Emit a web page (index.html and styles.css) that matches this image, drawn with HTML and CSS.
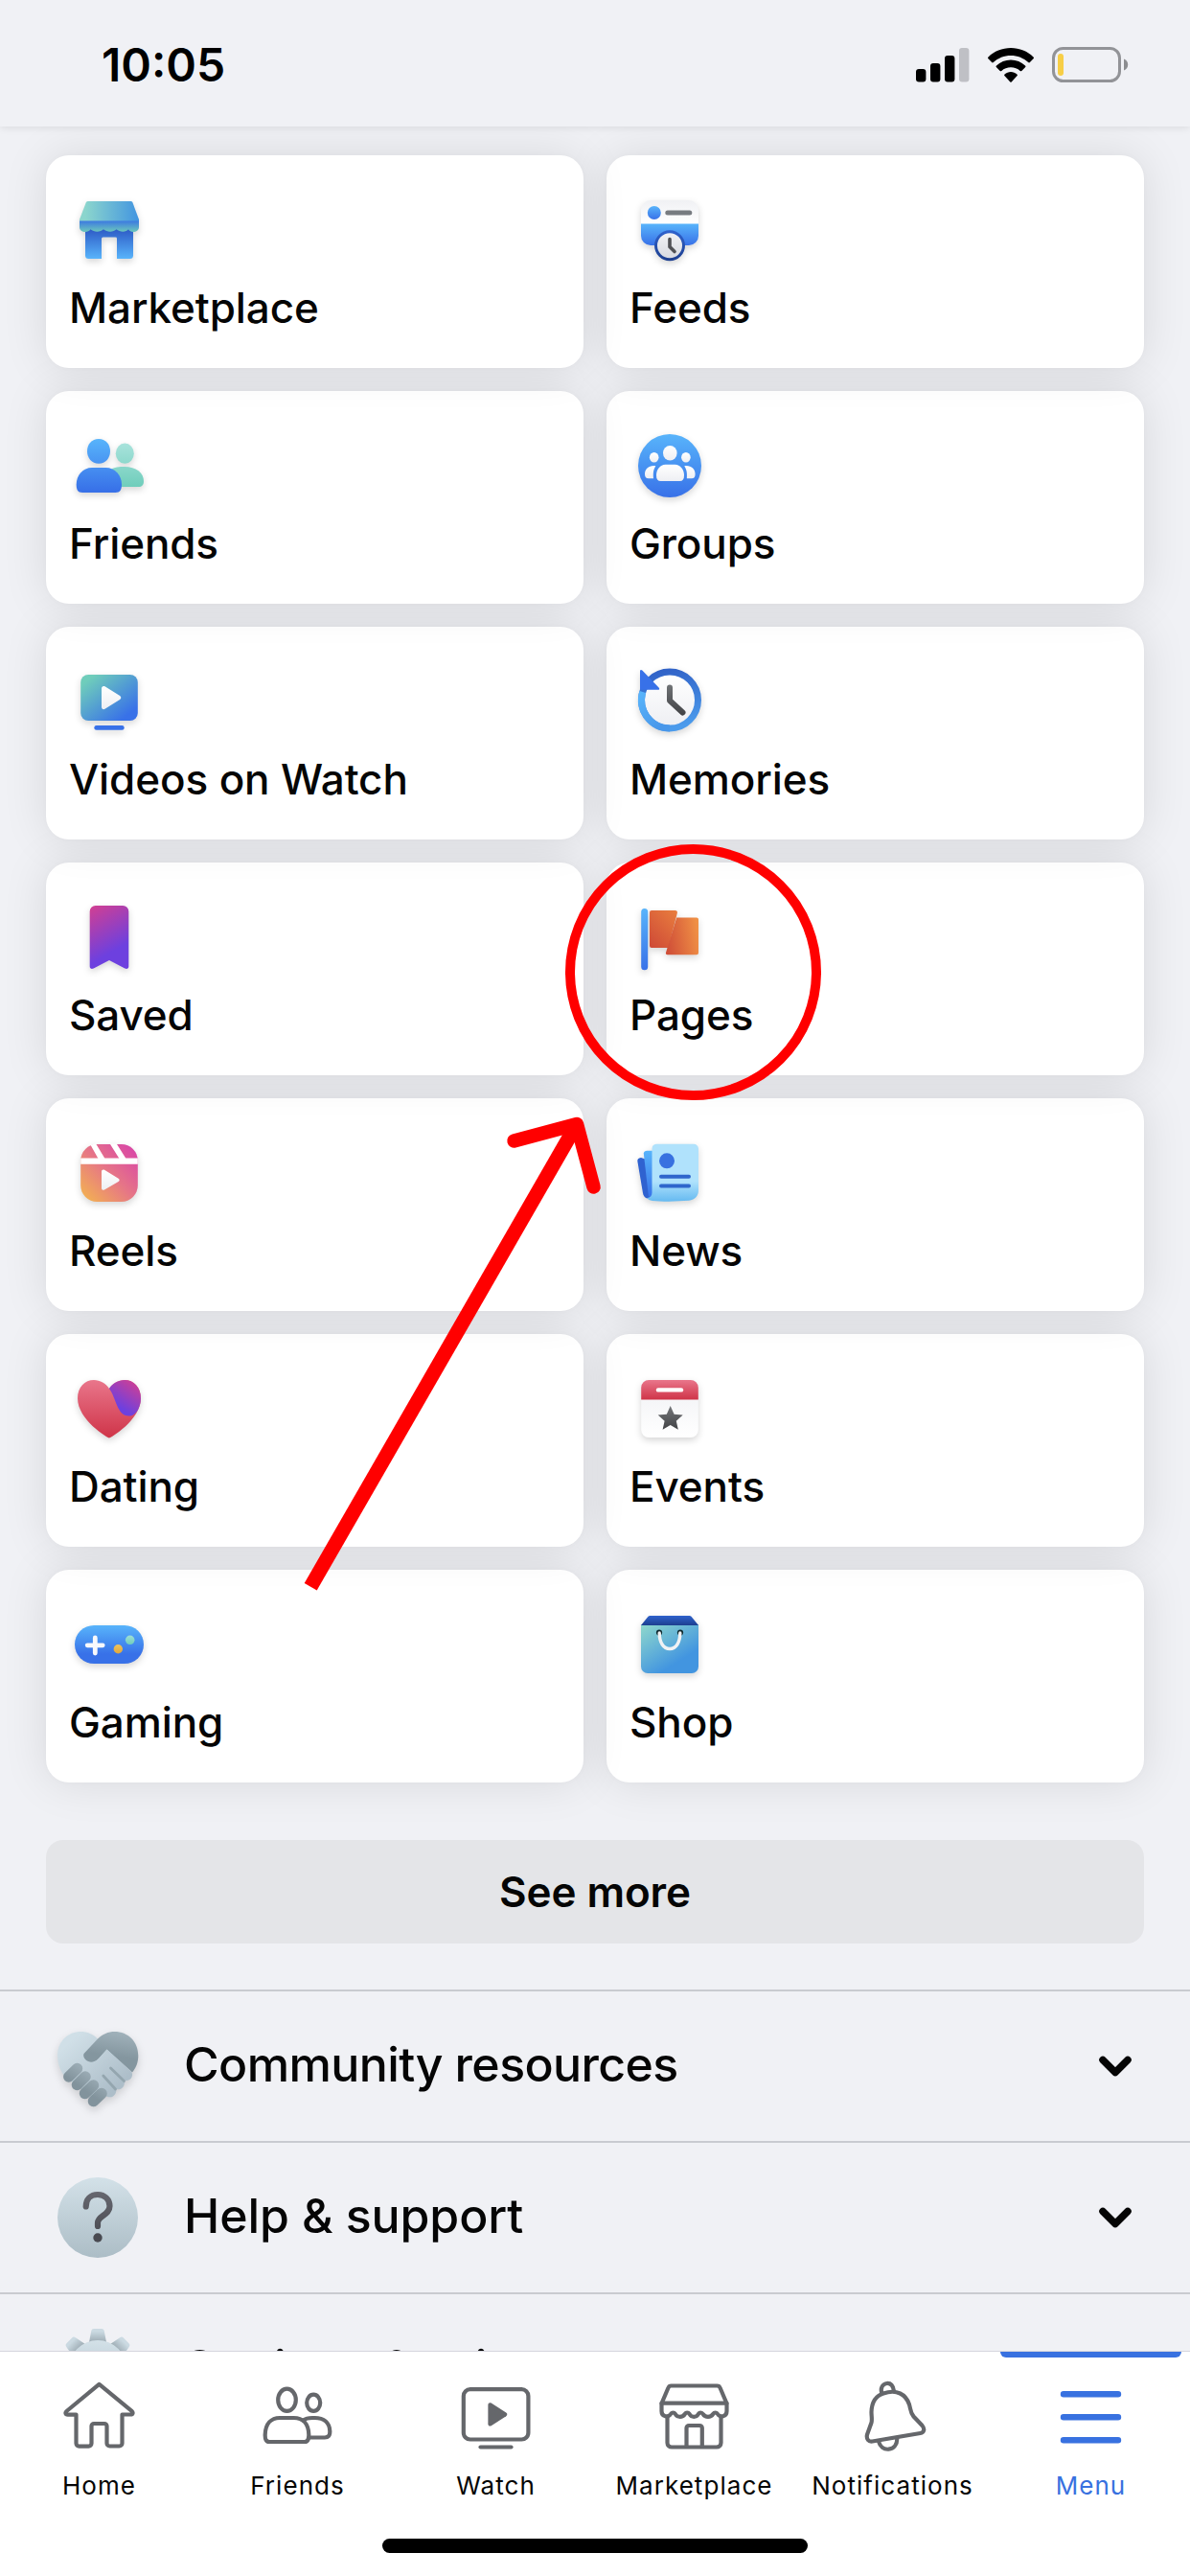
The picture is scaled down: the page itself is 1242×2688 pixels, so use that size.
FILE: index.html
```html
<!DOCTYPE html>
<html lang="en">
<head>
<meta charset="utf-8">
<title>Menu</title>
<link rel="stylesheet" href="styles.css">
</head>
<body>
<svg class="defs" width="0" height="0" aria-hidden="true">
  <defs>
    <linearGradient id="blue" x1="0" y1="0" x2="0" y2="1"><stop offset="0" stop-color="#58b4fb"/><stop offset="1" stop-color="#3871e8"/></linearGradient>
    <linearGradient id="blueUp" x1="0" y1="1" x2="0" y2="0"><stop offset="0" stop-color="#58b4fb"/><stop offset="1" stop-color="#2c58c4"/></linearGradient>
    <linearGradient id="blueFull" gradientUnits="userSpaceOnUse" x1="0" y1="14" x2="0" y2="68"><stop offset="0" stop-color="#58b4fb"/><stop offset="1" stop-color="#3871e8"/></linearGradient>
    <linearGradient id="navy" x1="0" y1="0" x2="0" y2="1"><stop offset="0" stop-color="#2f62cc"/><stop offset="1" stop-color="#1d3f90"/></linearGradient>
    <linearGradient id="mintFull" gradientUnits="userSpaceOnUse" x1="0" y1="18" x2="0" y2="64"><stop offset="0" stop-color="#a9e3dc"/><stop offset="1" stop-color="#6fcdbb"/></linearGradient>
    <linearGradient id="mint" x1="0" y1="0" x2="0" y2="1"><stop offset="0" stop-color="#9fdfd6"/><stop offset="1" stop-color="#6fcdbb"/></linearGradient>
    <linearGradient id="roof" x1="0" y1="0" x2="1" y2="0"><stop offset=".1" stop-color="#8bd5cd"/><stop offset="1" stop-color="#4295e0"/></linearGradient>
    <linearGradient id="awning" x1="0" y1="0" x2="0" y2="1"><stop offset="0" stop-color="#3a76e2"/><stop offset="1" stop-color="#6cc8bc"/></linearGradient>
    <linearGradient id="paper" x1="0" y1="0" x2="0" y2="1"><stop offset="0" stop-color="#f0f1f4"/><stop offset="1" stop-color="#ffffff"/></linearGradient>
    <linearGradient id="face" x1="0" y1="0" x2="0" y2="1"><stop offset="0" stop-color="#ffffff"/><stop offset="1" stop-color="#eeeff3"/></linearGradient>
    <linearGradient id="dial" x1="0" y1="0" x2="0" y2="1"><stop offset="0" stop-color="#f2f3f6"/><stop offset="1" stop-color="#d7d9df"/></linearGradient>
    <linearGradient id="screen" x1="0" y1="0" x2="1" y2="1"><stop offset=".12" stop-color="#6fcdbb"/><stop offset=".85" stop-color="#3871e8"/></linearGradient>
    <linearGradient id="ring" x1=".3" y1="0" x2=".5" y2="1"><stop offset="0" stop-color="#3163c8"/><stop offset="1" stop-color="#4b9bec"/></linearGradient>
    <linearGradient id="ringTail" x1="0" y1="0" x2=".6" y2="1"><stop offset="0" stop-color="#58b4fb"/><stop offset="1" stop-color="#4897ea"/></linearGradient>
    <linearGradient id="hand" gradientUnits="userSpaceOnUse" x1="0" y1="24" x2="0" y2="56"><stop offset="0" stop-color="#717477"/><stop offset="1" stop-color="#424346"/></linearGradient>
    <linearGradient id="saved" x1=".1" y1="0" x2=".45" y2="1"><stop offset="0" stop-color="#cf3f94"/><stop offset=".8" stop-color="#6d40df"/></linearGradient>
    <linearGradient id="flagA" x1=".9" y1="0" x2=".1" y2="1"><stop offset="0" stop-color="#e87c3e"/><stop offset="1" stop-color="#cf4b37"/></linearGradient>
    <linearGradient id="flagB" x1="0" y1=".6" x2="1" y2=".4"><stop offset="0" stop-color="#d04f38"/><stop offset="1" stop-color="#f09045"/></linearGradient>
    <linearGradient id="reels" x1="0" y1="1" x2="1" y2="0"><stop offset=".08" stop-color="#f2ad55"/><stop offset=".5" stop-color="#e67686"/><stop offset=".9" stop-color="#da4aa4"/></linearGradient>
    <linearGradient id="heart" x1="0" y1="0" x2="0" y2="1"><stop offset="0" stop-color="#e9768b"/><stop offset="1" stop-color="#cf3448"/></linearGradient>
    <linearGradient id="lobe" x1="1" y1="0" x2=".4" y2="1"><stop offset=".1" stop-color="#cf3f94"/><stop offset=".85" stop-color="#6d40df"/></linearGradient>
    <linearGradient id="news" x1="0" y1="0" x2="0" y2="1"><stop offset=".65" stop-color="#b0e2fc"/><stop offset="1" stop-color="#66baf1"/></linearGradient>
    <linearGradient id="crimson" x1="0" y1="0" x2="0" y2="1"><stop offset="0" stop-color="#e9768b"/><stop offset="1" stop-color="#cf3448"/></linearGradient>
    <linearGradient id="star" x1="0" y1="0" x2="0" y2="1"><stop offset="0" stop-color="#75777a"/><stop offset="1" stop-color="#424346"/></linearGradient>
    <linearGradient id="pad" x1="0" y1="0" x2="0" y2="1"><stop offset="0" stop-color="#58b4fb"/><stop offset=".75" stop-color="#3871e8"/></linearGradient>
    <linearGradient id="gold" x1="0" y1="0" x2="0" y2="1"><stop offset="0" stop-color="#efc45c"/><stop offset="1" stop-color="#dfa63d"/></linearGradient>
    <linearGradient id="bag" x1="0" y1="0" x2=".75" y2="1"><stop offset="0" stop-color="#8fd8cc"/><stop offset=".8" stop-color="#4295e0"/></linearGradient>
    <linearGradient id="slate" x1="0" y1="0" x2="0" y2="1"><stop offset="0" stop-color="#d3e1e8"/><stop offset="1" stop-color="#acbdc6"/></linearGradient>
    <linearGradient id="palm" gradientUnits="userSpaceOnUse" x1="20" y1="10" x2="66" y2="60"><stop offset="0" stop-color="#d0dfe7"/><stop offset="1" stop-color="#adbec9"/></linearGradient>
    <linearGradient id="sleeve" gradientUnits="userSpaceOnUse" x1="66" y1="4" x2="60" y2="44"><stop offset="0" stop-color="#a3b4bd"/><stop offset=".7" stop-color="#84969f"/></linearGradient>
    <linearGradient id="finger" gradientUnits="userSpaceOnUse" x1="34" y1="50" x2="24" y2="64"><stop offset="0" stop-color="#9aabb4"/><stop offset="1" stop-color="#82939c"/></linearGradient>
    <linearGradient id="query" gradientUnits="userSpaceOnUse" x1="0" y1="15" x2="0" y2="68"><stop offset="0" stop-color="#66676f"/><stop offset="1" stop-color="#46474e"/></linearGradient>
    <linearGradient id="tooth" x1="0" y1="0" x2="0" y2="1"><stop offset=".2" stop-color="#cbdae2"/><stop offset="1" stop-color="#9dabb3"/></linearGradient>
  </defs>
</svg>

<header class="status-bar">
  <time class="clock">10:05</time>
  <div class="status-icons">
    <svg width="56" height="36" viewBox="0 0 56 36"><rect x="0" y="22" width="10.400" height="13.500" rx="3"/><rect x="15" y="16" width="10.400" height="19.500" rx="3"/><rect x="30" y="8" width="10.400" height="27.500" rx="3"/><rect x="45" y="0" width="10.400" height="35.500" rx="3" fill="#bfc0c5"/></svg>
    <svg width="48" height="36" viewBox="0 0 48 36"><path d="M24 0C33 0 41.500 3.500 47.500 9.400a1.300 1.300 0 0 1 0 1.900L43.900 15a1.200 1.200 0 0 1-1.700 0C37.400 10.500 31 7.900 24 7.900S10.600 10.500 5.800 15a1.200 1.200 0 0 1-1.700 0L.5 11.300a1.300 1.300 0 0 1 0-1.900C6.500 3.500 15 0 24 0zM24 12.600c5.700 0 11 2.200 15 5.800a1.300 1.300 0 0 1 0 1.900l-3.700 3.600a1.200 1.200 0 0 1-1.600 0C31.100 21.700 27.700 20.300 24 20.300s-7.100 1.400-9.700 3.600a1.200 1.200 0 0 1-1.600 0L9 20.300a1.300 1.300 0 0 1 0-1.900c4-3.600 9.300-5.800 15-5.800zM24 25c2.400 0 4.700.9 6.400 2.400a1.200 1.200 0 0 1 0 1.800l-5.500 6.100a1.200 1.200 0 0 1-1.800 0l-5.500-6.100a1.200 1.200 0 0 1 0-1.800C19.300 25.900 21.600 25 24 25z"/></svg>
    <svg width="80" height="38" viewBox="0 0 80 38"><rect x="1.500" y="1.500" width="69" height="34" rx="10" fill="none" stroke="#929397" stroke-width="3"/><rect x="6" y="7" width="6" height="23" rx="3" fill="#f7ce46"/><path d="M75 12.500c2.600 1 4.200 3.300 4.200 6s-1.600 5-4.200 6z" fill="#8c8d90"/></svg>
  </div>
</header>

<main class="content">
  <section class="shortcuts">
    <a class="tile"><svg class="tile-icon" viewBox="0 0 84 84"><path d="M17 40h50v28.500a3.500 3.500 0 0 1-3.500 3.500H50V51a1.500 1.500 0 0 0-1.500-1.500h-13A1.500 1.500 0 0 0 34 51v21H20.500a3.500 3.500 0 0 1-3.500-3.500z" fill="url(#blueUp)"/><path d="M11 32h62v7c0 6-9 6.500-11 2.300-2 3.200-9 3.200-12.500 0-3 3.200-10 3.200-13.500 0-3.200 3.200-10 3.200-13.500 0C20 45.500 11 45 11 39z" fill="url(#awning)"/><path d="M19.500 12h45.500l1.200.8L73 31v1.500H11V31l7-18.200z" fill="url(#roof)"/></svg><span class="tile-label">Marketplace</span></a>
    <a class="tile"><svg class="tile-icon" viewBox="0 0 84 84"><path d="M12 36V21a10 10 0 0 1 10-10h40a10 10 0 0 1 10 10v15z" fill="url(#paper)"/><path d="M12 35.500h60V48a10 10 0 0 1-10 10H22a10 10 0 0 1-10-10z" fill="url(#blue)"/><circle cx="25.800" cy="24" r="7" fill="url(#blue)"/><path d="M39.800 24h23" stroke="#777b80" stroke-width="5" stroke-linecap="round"/><circle cx="42" cy="58.300" r="14.500" fill="url(#dial)" stroke="url(#navy)" stroke-width="3"/><path d="M42 51.500v8l5 5" fill="none" stroke="#505155" stroke-width="3.600" stroke-linecap="round"/></svg><span class="tile-label">Feeds</span></a>
    <a class="tile"><svg class="tile-icon" viewBox="0 0 84 84"><ellipse cx="58.300" cy="29.200" rx="9.500" ry="10.600" fill="url(#mintFull)"/><path d="M44 45.500C48 43.300 52 43 58 43c12 0 20 6.500 20 15 0 4-2 6-5.500 6H50z" fill="url(#mintFull)"/><path d="M31 14c7.300 0 12 5.500 12 12.800S38.300 39.700 31 39.700s-12-5.600-12-12.900S23.700 14 31 14z" fill="url(#blueFull)"/><path d="M24 44h14.500C48 44 55 52 55 61.500c0 5-1.500 8.500-6.500 8.500H14c-5 0-6.300-3.500-6.300-8.500C7.700 52 14.500 44 24 44z" fill="url(#blueFull)"/></svg><span class="tile-label">Friends</span></a>
    <a class="tile"><svg class="tile-icon" viewBox="0 0 84 84"><circle cx="42" cy="42" r="33" fill="url(#blue)"/><g fill="url(#face)"><ellipse cx="42.300" cy="28.700" rx="7.300" ry="7.700"/><ellipse cx="25.700" cy="33.300" rx="4.800" ry="5.300"/><ellipse cx="58.900" cy="33.300" rx="4.800" ry="5.300"/><path d="M37.500 40.700h10C53 40.700 57 46 57 52c0 4-1.500 6-4.500 6h-20c-3 0-4.500-2-4.500-6 0-6 4-11.300 9.500-11.300z"/><path d="M27.300 42.200C25 46 24.500 49 25 55.300h-5c-2.600 0-4-1.500-4-4.500 0-5.600 4.600-9.600 11.300-8.600z"/><path d="M57.300 42.200C59.600 46 60.300 49 59.800 55.300h5c2.600 0 3.800-1.500 3.800-4.500 0-5.600-4.600-9.600-11.300-8.600z"/></g></svg><span class="tile-label">Groups</span></a>
    <a class="tile"><svg class="tile-icon" viewBox="0 0 84 84"><rect x="12.200" y="14" width="59.600" height="48" rx="8" fill="url(#screen)"/><path d="M34 28.300c0-2 1.800-3 3.500-2l15.600 9.800c1.600 1 1.600 2.800 0 3.800L37.500 49.800c-1.700 1-3.500 0-3.500-2z" fill="url(#face)"/><rect x="26.300" y="67" width="31.400" height="4.800" rx="2.400" fill="#3871e8"/></svg><span class="tile-label">Videos on Watch</span></a>
    <a class="tile"><svg class="tile-icon" viewBox="0 0 84 84"><circle cx="42" cy="40.500" r="27" fill="url(#face)"/><circle cx="42" cy="40.500" r="29.500" fill="none" stroke="url(#ring)" stroke-width="7"/><path d="M13.800 32A29.500 29.500 0 0 0 42 70" fill="none" stroke="url(#ringTail)" stroke-width="7"/><path d="M42 27.500V41l13.500 12.500" fill="none" stroke="url(#hand)" stroke-width="6" stroke-linecap="round" stroke-linejoin="round"/><path d="M11 10.500c0-1.600 1.200-2 2.300-.9L30.600 27.400c1.200 1.200.6 2.400-1 2.400H11z" fill="#3871e8"/></svg><span class="tile-label">Memories</span></a>
    <a class="tile"><svg class="tile-icon" viewBox="0 0 84 84"><path d="M27.700 9h28.600a6 6 0 0 1 6 6v57.500c0 2.300-2 3-4 2L42 66l-16.300 8.500c-2 1-4 .3-4-2V15a6 6 0 0 1 6-6z" fill="url(#saved)"/></svg><span class="tile-label">Saved</span></a>
    <a class="tile"><svg class="tile-icon" viewBox="0 0 84 84"><rect x="12.200" y="12" width="7" height="64.200" rx="3.500" fill="url(#blue)"/><path d="M23 14h24.500c2 0 2.800 1.200 2.300 3L40.500 53H23a2 2 0 0 1-2-2V16a2 2 0 0 1 2-2z" fill="url(#flagA)"/><path d="M49.200 21.500H70a2 2 0 0 1 2 2v34.800a2 2 0 0 1-2 2H39.500c-1.300 0-1.900-1-1.500-2.200z" fill="url(#flagB)"/></svg><span class="tile-label">Pages</span></a>
    <a class="tile"><svg class="tile-icon" viewBox="0 0 84 84"><rect x="12.200" y="12" width="59.600" height="60" rx="17" fill="url(#reels)"/><path d="M12.200 26.500h59.600v6.300H12.200z" fill="#fff"/><path d="M22.500 12.800l5.500-1.600L37.500 27h-7zM42.700 11.500h7L59.500 27h-7z" fill="#fff"/><path d="M34 40.500c0-1.800 1.600-2.600 3-1.800l14.600 9c1.400.9 1.400 2.400 0 3.200L37 59.500c-1.400.8-3 0-3-1.800z" fill="url(#face)"/></svg><span class="tile-label">Reels</span></a>
    <a class="tile"><svg class="tile-icon" viewBox="0 0 84 84"><path d="M12 26c-2.800.4-4 1.600-3.600 4L14 63c.8 4 3 5.600 6 5.600l6-.6-8-40z" fill="#2f62d0"/><path d="M14.800 21.500c.3-1.800 1.400-2.800 3.500-2.800h9v48c-2 2.500-6 2-7.500-1.200z" fill="url(#blue)"/><path d="M28 11.800h39a5 5 0 0 1 5 5V60c0 6-3.500 10-10 10.800-12 1-28 1.200-38 .1-3-.3-5-1.300-5.500-2.900 3-.3 5-2 5-5.500V16.800a5 5 0 0 1 4.500-5z" fill="url(#news)"/><circle cx="39" cy="29.300" r="8" fill="#3871e0"/><path d="M33 45.700h29M33 55.400h29" stroke="#2f66cc" stroke-width="4" stroke-linecap="round"/></svg><span class="tile-label">News</span></a>
    <a class="tile"><svg class="tile-icon" viewBox="0 0 84 84"><path d="M42 72.500c1 0 33-18.500 33-41.500C75 19.500 67.500 12 58 12c-6.500 0-12.500 3.500-16 9-3.500-5.500-9.500-9-16-9C16.500 12 9 19.500 9 31c0 23 32 41.500 33 41.500z" fill="url(#heart)"/><path d="M42 21c3.500-5.500 9.500-9 16-9 9.500 0 17 7.500 17 19 0 4-1 8-2.800 11.700C69.500 47.500 66 49.500 62.500 49.500 50 49.500 49.500 31 42 21z" fill="url(#lobe)"/></svg><span class="tile-label">Dating</span></a>
    <a class="tile"><svg class="tile-icon" viewBox="0 0 84 84"><rect x="12.200" y="12" width="59.600" height="60" rx="8" fill="url(#paper)"/><path d="M12.200 32.500V20a8 8 0 0 1 8-8h43.600a8 8 0 0 1 8 8v12.500z" fill="url(#crimson)"/><path d="M30 22.400h24" stroke="#fff" stroke-width="4.400" stroke-linecap="round"/><path d="M42.700 39l3.900 8.700 9.100.9-6.900 6.200 2 9-8.100-4.700-8.100 4.700 2-9-6.900-6.200 9.100-.9z" fill="url(#star)"/></svg><span class="tile-label">Events</span></a>
    <a class="tile"><svg class="tile-icon" viewBox="0 0 84 84"><rect x="6" y="22" width="72" height="40" rx="20" fill="url(#pad)"/><path d="M27.300 35v16M19.200 42.800h16" stroke="#f8f9fc" stroke-width="4.800" stroke-linecap="round"/><circle cx="51.300" cy="46.700" r="4.700" fill="url(#gold)"/><circle cx="63.700" cy="37.300" r="4.800" fill="url(#mint)"/></svg><span class="tile-label">Gaming</span></a>
    <a class="tile"><svg class="tile-icon" viewBox="0 0 84 84"><path d="M12 21.500h60V65a7 7 0 0 1-7 7H19a7 7 0 0 1-7-7z" fill="url(#bag)"/><path d="M21 12h42l1.500.8L72 22H12l7.500-9.200z" fill="url(#navy)"/><circle cx="31" cy="29.500" r="3.100" fill="#0f2a30"/><circle cx="53" cy="29.500" r="3.100" fill="#0f2a30"/><path d="M31.200 30c0 10 4.300 16.500 10.800 16.500S52.800 40 52.800 30" fill="none" stroke="#f1f2f4" stroke-width="3.400" stroke-linecap="round"/></svg><span class="tile-label">Shop</span></a>
  </section>

  <button class="see-more" type="button">See more</button>

  <section class="groups">
    <a class="row">
      <svg class="row-icon shaded" viewBox="0 0 84 84"><path d="M42 13.500C37.500 8.500 31 6 24.500 6 10.500 6 0 16.500 0 31c0 9 3.500 17 8 22l34 26 28-38z" fill="url(#palm)"/><path d="M42 13.500C47 8.500 53 6 59.500 6 74 6 84.300 16.500 84.300 31c0 7-2.300 13-6.300 17.500L51.500 24.500 43 34c-4 4-9 4.500-12 2.500s-4.500-5-3.500-7.500z" fill="url(#sleeve)"/><path d="M51.500 24.500L76.500 47c2.500 2.500 1.800 6.500-.5 8.500s-4.500 1.700-6 1.500c.3 3.500-.7 7-3.500 8.500-2 1-3.500 1-5 .5 0 3-1 6-3.500 7.500-3 1.500-5.500.8-8-.5L36 60l-6-22c5 1.500 9 .5 13-4z" fill="url(#palm)"/><path d="M55.500 44l14 13.500M47.800 52l12.700 14" stroke="#94a6af" stroke-width="2.800" stroke-linecap="round"/><g fill="none" stroke="url(#finger)" stroke-width="11.500" stroke-linecap="round"><path d="M20.500 44.500L11.800 53"/><path d="M29 53l-8.500 8.500"/><path d="M37.500 62l-9 8.500"/><path d="M46 70.500l-8.500 8"/></g></svg>
      <span class="row-label community">Community resources</span>
      <svg class="chevron" viewBox="0 0 36 24"><path d="M5 5.500l13 13 13-13"/></svg>
    </a>
    <a class="row">
      <svg class="row-icon" viewBox="0 0 84 84"><circle cx="42" cy="42" r="42" fill="url(#slate)"/><path d="M29.700 30.500C29.700 23 34.500 18 42 18c7.300 0 12.500 5 12.500 12 0 9.500-12.500 10-12.500 17.500V51" fill="none" stroke="url(#query)" stroke-width="6.200" stroke-linecap="round"/><circle cx="42" cy="63" r="4.700" fill="#494a51"/></svg>
      <span class="row-label">Help &amp; support</span>
      <svg class="chevron" viewBox="0 0 36 24"><path d="M5 5.500l13 13 13-13"/></svg>
    </a>
    <a class="row">
      <svg class="row-icon" viewBox="0 0 84 84"><defs><path id="cog" d="M33 14l2.200-11.500C35.500.8 36.500 0 38 0h8c1.500 0 2.500.8 2.800 2.500L51 14z" fill="url(#tooth)"/></defs><use href="#cog"/><use href="#cog" transform="rotate(45 42 42)"/><use href="#cog" transform="rotate(90 42 42)"/><use href="#cog" transform="rotate(135 42 42)"/><use href="#cog" transform="rotate(180 42 42)"/><use href="#cog" transform="rotate(225 42 42)"/><use href="#cog" transform="rotate(270 42 42)"/><use href="#cog" transform="rotate(315 42 42)"/><circle cx="42" cy="42" r="30" fill="url(#slate)"/></svg>
      <span class="row-label">Settings &amp; privacy</span>
      <svg class="chevron" viewBox="0 0 36 24"><path d="M5 5.500l13 13 13-13"/></svg>
    </a>
  </section>
</main>

<nav class="tab-bar">
  <div class="tabs">
    <a class="tab"><svg class="tab-icon" viewBox="0 0 84 84"><path d="M41.500 9.800L7.500 38c-1.800 1.600-1.200 3.600 1.200 3.600h8.800v30a3 3 0 0 0 3 3h10a3 3 0 0 0 3-3V53.500a2.500 2.500 0 0 1 2.500-2.500h11a2.500 2.500 0 0 1 2.500 2.500v18a3 3 0 0 0 3 3h10a3 3 0 0 0 3-3v-30h8.800c2.400 0 3-2 1.200-3.600z"/></svg><span>Home</span></a>
    <a class="tab"><svg class="tab-icon" viewBox="0 0 84 84"><ellipse cx="30.500" cy="26.300" rx="9.300" ry="11.600"/><ellipse cx="58.200" cy="29.300" rx="7" ry="8.600"/><path d="M23 45h14.500C47 45 53 51 53.300 62.500c.1 5-1.300 7.500-4.300 7.500H12c-3 0-4.500-2.500-4.300-7.500C8.100 51 14 45 23 45z"/><path d="M47.500 47.500C50 45.500 53 45 57 45h2.500C69 45 75 50 75.300 59c.1 4.500-1.600 6.500-5.300 6.500H53.500"/></svg><span>Friends</span></a>
    <a class="tab"><svg class="tab-icon" viewBox="0 0 84 84"><rect x="7.800" y="15.200" width="67.600" height="52.300" rx="7"/><path class="solid" d="M33.400 31.500c0-2 1.700-2.900 3.300-1.900l15.500 10c1.500 1 1.500 2.600 0 3.600l-15.500 10c-1.600 1-3.300.1-3.300-1.900z"/><path d="M25.500 75.500h32"/></svg><span>Watch</span></a>
    <a class="tab"><svg class="tab-icon" viewBox="0 0 84 84"><path d="M17.500 11.500h48c1.500 0 2.500.7 3 2L75.500 30v8c0 6-7 7-9.500 3-1-2-3.500-2-4.800 0-2.500 3.800-8 3.800-10.500 0-1.200-2-3.500-2-4.800 0-2.300 3.800-7 3.800-9.300 0-1.300-2-3.500-2-4.800 0-2.400 3.800-7.700 3.800-10 0-1.300-2-3.700-2-4.800 0-2.500 4-9.500 3-9.500-3v-8l7-16.500c.5-1.300 1.500-2 3-2z"/><path d="M7.500 29.700h68M13.500 44v27a4.500 4.500 0 0 0 4.500 4.500h47a4.500 4.500 0 0 0 4.500-4.500V44"/><path d="M33.500 75V55.500a2.500 2.500 0 0 1 2.500-2.500h11.300a2.500 2.500 0 0 1 2.500 2.500V75"/></svg><span>Marketplace</span></a>
    <a class="tab"><svg class="tab-icon" viewBox="0 0 84 84"><path d="M30.500 19.500C28.500 14 31 9.500 35.700 9c4-.3 6.500 3 7.300 8"/><path d="M32 19.500c14-4.800 23.500 1 27 11.500 1.500 5 1 8.500 4.500 12.500L72.500 53c3 3.500 2 7.300-2 8L20.500 69.500c-4 .7-6.500-2.500-5.500-7l4.500-12.500c.9-3 0-7 0-11 .3-10 4.500-17 12.500-19.500z"/><path d="M27 69.500c1.500 5.500 5.500 8.700 10.500 8.200 5.500-.6 8.800-5 8.800-11"/></svg><span>Notifications</span></a>
    <a class="tab active"><svg class="tab-icon" viewBox="0 0 84 84"><path d="M13 20.300h57M13 44.300h57M13 68.300h57"/></svg><span>Menu</span></a>
  </div>
  <div class="home-indicator"></div>
</nav>

<svg class="annotation" viewBox="0 0 1242 2688" aria-hidden="true">
  <circle cx="723.500" cy="1014.500" r="128.500" stroke-width="10"/>
  <path d="M324.200 1655.800L602 1173" stroke-width="15"/>
  <path d="M536.500 1190.500L602 1173l17.500 65.500" stroke-width="14.500" stroke-linecap="round" stroke-linejoin="round"/>
</svg>
</body>
</html>
```
FILE: styles.css
```css
* {
  box-sizing: border-box;
}

body {
  margin: 0;
  width: 1242px;
  height: 2688px;
  display: flex;
  flex-direction: column;
  position: relative;
  overflow: hidden;
  background: #f0f1f5;
  color: #050505;
  font-family: Inter, "Liberation Sans", sans-serif;
}

svg {
  display: block;
  flex: none;
}

.defs {
  position: absolute;
}

/* Status bar */
.status-bar {
  flex: none;
  height: 132px;
  padding: 4px 64px 0 106px;
  display: flex;
  align-items: center;
  justify-content: space-between;
  position: relative;
  z-index: 20;
  background: #f0f1f5;
  box-shadow: 0 0 9px rgba(0, 0, 0, 0.12);
}

.clock {
  font-size: 48px;
  font-weight: 600;
  line-height: 60px;
  color: #000;
}

.status-icons {
  display: flex;
  align-items: center;
  gap: 19px;
}

/* Scrolling content */
.content {
  flex: 1;
  min-height: 0;
  overflow: hidden;
  padding-top: 30px;
}

.shortcuts {
  display: grid;
  grid-template-columns: 1fr 1fr;
  grid-auto-rows: 222px;
  gap: 24px;
  padding: 0 48px;
}

.tile {
  position: relative;
  display: flex;
  flex-direction: column;
  gap: 12px;
  padding: 36px 24px 0;
  border-radius: 24px;
  background: #fff;
  box-shadow: 0 0 48px rgba(0, 0, 0, 0.1), 0 0 6px rgba(0, 0, 0, 0.025);
}

/* Earlier tiles cast their shadow over the later ones */
.tile:nth-child(1) { z-index: 14; }
.tile:nth-child(2) { z-index: 13; }
.tile:nth-child(3) { z-index: 12; }
.tile:nth-child(4) { z-index: 11; }
.tile:nth-child(5) { z-index: 10; }
.tile:nth-child(6) { z-index: 9; }
.tile:nth-child(7) { z-index: 8; }
.tile:nth-child(8) { z-index: 7; }
.tile:nth-child(9) { z-index: 6; }
.tile:nth-child(10) { z-index: 5; }
.tile:nth-child(11) { z-index: 4; }
.tile:nth-child(12) { z-index: 3; }
.tile:nth-child(13) { z-index: 2; }
.tile:nth-child(14) { z-index: 1; }

.tile-icon {
  width: 84px;
  height: 84px;
  filter: drop-shadow(0 3px 3.500px rgba(0, 0, 0, 0.16));
}

.tile-label {
  font-size: 44px;
  font-weight: 500;
  line-height: 54px;
  letter-spacing: -0.1px;
}

.see-more {
  display: block;
  width: 1146px;
  height: 108px;
  margin: 60px 48px 48px;
  padding: 0;
  border: 0;
  border-radius: 18px;
  background: #e4e5e8;
  color: #050505;
  font: 600 44px/54px Inter, "Liberation Sans", sans-serif;
  letter-spacing: -0.1px;
}

.row {
  display: flex;
  align-items: center;
  height: 158px;
  padding: 0 60px;
  border-top: 2px solid #c9cbd0;
}

.row-icon {
  width: 84px;
  height: 84px;
  overflow: visible;
}

.row-icon.shaded {
  filter: drop-shadow(0 4px 4px rgba(0, 0, 0, 0.15));
}

.row-label {
  flex: 1;
  margin-left: 48px;
  padding-bottom: 4px;
  font-size: 50px;
  font-weight: 500;
  line-height: 60px;
  letter-spacing: -0.1px;
}

.row-label.community {
  letter-spacing: -0.6px;
}

.chevron {
  width: 36px;
  height: 24px;
  fill: none;
  stroke: #050505;
  stroke-width: 7.500;
  stroke-linecap: round;
  stroke-linejoin: round;
}

/* Bottom tabs */
.tab-bar {
  flex: none;
  height: 235px;
  display: flex;
  flex-direction: column;
  align-items: center;
  position: relative;
  z-index: 20;
  border-top: 1px solid #d6d6de;
  background: #fff;
}

.tabs {
  width: 100%;
  height: 195px;
  display: grid;
  grid-template-columns: repeat(6, 207px);
}

.tab {
  display: flex;
  flex-direction: column;
  align-items: center;
  padding-top: 24px;
  position: relative;
  font-size: 26px;
  line-height: 32px;
  letter-spacing: 1.05px;
  color: #050505;
}

.tab span {
  margin-top: 16px;
  white-space: nowrap;
}

.tab-icon {
  width: 84px;
  height: 84px;
  fill: none;
  stroke: #65676b;
  stroke-width: 4.200;
  stroke-linecap: round;
  stroke-linejoin: round;
}

.tab-icon .solid {
  fill: #65676b;
  stroke: none;
}

.tab.active {
  color: #3871e0;
}

.tab.active .tab-icon {
  stroke: #3871e0;
  stroke-width: 6.400;
}

.tab.active::before {
  content: "";
  position: absolute;
  top: 0;
  left: 9px;
  width: 189px;
  height: 6px;
  border-radius: 0 0 6px 6px;
  background: #3871e0;
}

.home-indicator {
  width: 444px;
  height: 15px;
  border-radius: 8px;
  background: #000;
}

/* Hand-drawn highlight laid over the whole screen */
.annotation {
  position: absolute;
  inset: 0;
  width: 1242px;
  height: 2688px;
  z-index: 30;
  fill: none;
  stroke: #f00;
  pointer-events: none;
}
```
